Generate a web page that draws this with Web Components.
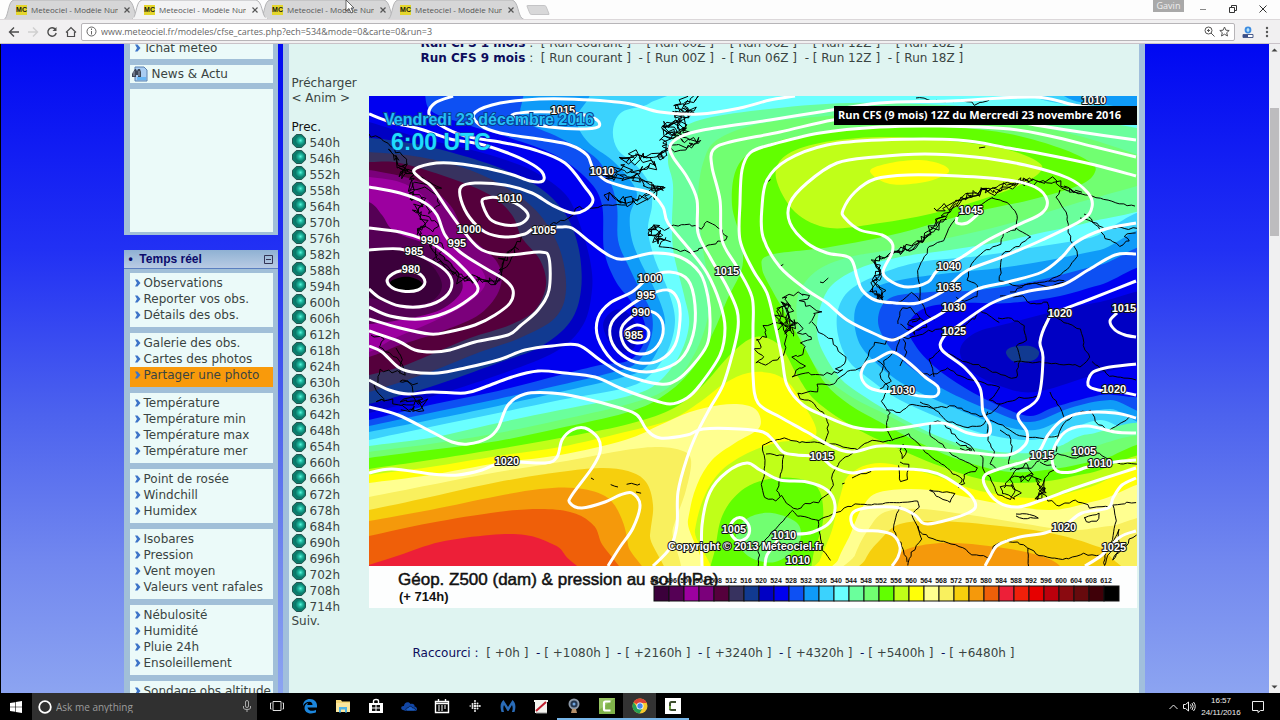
<!DOCTYPE html>
<html lang="fr">
<head>
<meta charset="utf-8">
<title>Meteociel - Modèle Numérique CFS</title>
<style>
  html, body { height: 100%; }
  body {
    margin: 0;
    display: flex;
    flex-direction: column;
    overflow: hidden;
    font: 12px/16px "DejaVu Sans", Verdana, sans-serif;
    color: #3a4442;
    background: #000;
  }
</style>
</head>
<body>
<browser-chrome></browser-chrome>
<page-view>
  <side-column slot="side"></side-column>
  <model-page slot="main"></model-page>
</page-view>
<task-bar></task-bar>

<script>
function define(name, html) {
  customElements.define(name, class extends HTMLElement {
    connectedCallback() {
      if (this.shadowRoot) return;
      this.attachShadow({ mode: 'open' });
      this.shadowRoot.innerHTML = typeof html === 'function' ? html(this) : html;
    }
  });
}

/* ---------- browser window ---------- */

define('browser-tab', el => `
  <style>
    :host { display: block; position: relative; flex: 0 0 128px; width: 128px; min-width: 0; height: 19px; }
    :host([active]) { z-index: 1; }
    svg.shape { position: absolute; left: 0; top: 0; }
    .row { position: relative; display: flex; align-items: center; height: 19px; padding: 0 0 0 12px; gap: 4px; }
    .fav { flex: 0 0 11px; height: 10px; background: #e4d62c; color: #1a1a10; font: bold 7px/10px "Liberation Sans", sans-serif; text-align: center; }
    .title { flex: 1; min-width: 0; overflow: hidden; white-space: nowrap; font: 8px/16px "Open Sans", sans-serif; color: #555; }
    button { flex: 0 0 10px; height: 10px; padding: 0; border: 0; background: none; line-height: 0; }
  </style>
  <svg class="shape" width="136" height="19" viewBox="0 0 136 19">
    <path d="M0 19.500C4 18 4 4 8 1L10 0H124L126 1C131 5 130 18 136 19.500Z" fill="${el.hasAttribute('active') ? '#f3f3f4' : '#d6d6d7'}" stroke="#b4b4b6" stroke-width="1"/>
    ${el.hasAttribute('active') ? '<path d="M1 18.500H135" stroke="#f3f3f4" stroke-width="2"/>' : ''}
  </svg>
  <div class="row">
    <span class="fav">MC</span>
    <span class="title"><slot></slot></span>
    <button aria-label="Close tab"><svg width="10" height="10" viewBox="0 0 10 10"><path d="M2.500 2.500L7.500 7.500M7.500 2.500L2.500 7.500" stroke="#555" stroke-width="1.200"/></svg></button>
  </div>
`);

define('browser-chrome', `
  <style>
    :host { display: block; position: relative; flex: none; background: #fdfdfd; }
    button { padding: 0; border: 0; background: none; line-height: 0; }
    .tabs { display: flex; height: 19px; padding-left: 4px; border-bottom: 1px solid #dcd8da; }
    .new { width: 20px; height: 10px; margin: 5px 0 0 12px; background: #d8d8d9; border: 1px solid #c4c4c6; transform: skewX(22deg); border-radius: 2px; }
    .controls { display: flex; margin-left: auto; padding-right: 2px; }
    .controls button { width: 30px; height: 18px; }
    .controls .user { width: 31px; height: 12px; margin-right: 4px; background: #a9a9a9; color: #eee; font: 9px/12px "Open Sans", sans-serif; }
    .bar { display: flex; align-items: center; height: 23px; background: #f1f0f1; border-bottom: 1px solid #c9c2c8; padding: 0 4px 0 4px; }
    .bar > button { width: 19px; height: 18px; }
    .omni { flex: 1; display: flex; align-items: center; height: 16px; margin: 0 3px 0 1px; padding: 0 4px; background: #fff; border: 1px solid #b7b5b8; border-radius: 2px; gap: 4px; }
    input { flex: 1; min-width: 0; border: 0; padding: 0; background: none; outline: 0; font: 9px/14px "Open Sans", sans-serif; color: #666; }
    .cursor { position: absolute; left: 345px; top: 0; z-index: 3; }
  </style>
  <div class="tabs">
    <browser-tab>Meteociel - Modèle Num</browser-tab>
    <browser-tab active>Meteociel - Modèle Num</browser-tab>
    <browser-tab>Meteociel - Modèle Num</browser-tab>
    <browser-tab>Meteociel - Modèle Num</browser-tab>
    <button class="new" aria-label="New tab"></button>
    <div class="controls">
      <button class="user">Gavin</button>
      <button aria-label="Minimise"><svg width="10" height="10"><path d="M2 5.500H8" stroke="#888"/></svg></button>
      <button aria-label="Restore"><svg width="10" height="10" fill="none" stroke="#333"><path d="M1.500 3.500H6.500V8.500H1.500ZM3.500 3V1.500H8.500V6.500H7"/></svg></button>
      <button aria-label="Close"><svg width="10" height="10"><path d="M1.500 1.500L8.500 8.500M8.500 1.500L1.500 8.500" stroke="#333"/></svg></button>
    </div>
  </div>
  <div class="bar">
    <button aria-label="Back"><svg width="12" height="12" fill="none" stroke="#4c4c4c" stroke-width="1.400"><path d="M11 6H2M6 1.500L1.500 6L6 10.500"/></svg></button>
    <button aria-label="Forward"><svg width="12" height="12" fill="none" stroke="#cfcfcf" stroke-width="1.400"><path d="M1 6H10M6 1.500L10.500 6L6 10.500"/></svg></button>
    <button aria-label="Reload"><svg width="12" height="12" fill="none" stroke="#4c4c4c" stroke-width="1.400"><path d="M9.500 3.500A4.200 4.200 0 1 0 10.200 7"/><path d="M10.500 1V5H6.500Z" fill="#4c4c4c" stroke="none"/></svg></button>
    <button aria-label="Home"><svg width="12" height="12" fill="none" stroke="#4c4c4c" stroke-width="1.200"><path d="M1 6.500L6 1.500L11 6.500M2.500 6V10.500H9.500V6"/></svg></button>
    <div class="omni">
      <svg width="11" height="11" fill="none" stroke="#666"><circle cx="5.500" cy="5.500" r="4.500"/><path d="M5.500 5V8.500M5.500 2.500V4"/></svg>
      <input type="text" aria-label="Address" value="www.meteociel.fr/modeles/cfse_cartes.php?ech=534&amp;mode=0&amp;carte=0&amp;run=3">
      <svg width="11" height="11" fill="none" stroke="#555"><circle cx="4.500" cy="4.500" r="3.500"/><path d="M7 7L10.500 10.500M3 4.500H6M4.500 3V6"/></svg>
      <svg width="11" height="11" fill="none" stroke="#555"><path d="M5.500 1L6.900 4.200L10.200 4.500L7.700 6.700L8.500 10L5.500 8.200L2.500 10L3.300 6.700L0.800 4.500L4.100 4.200Z"/></svg>
    </div>
    <button aria-label="Extension"><svg width="12" height="12"><circle cx="6" cy="4" r="3.400" fill="#3c8be0"/><path d="M6 2V6M4.500 4H7.500" stroke="#dff"/><path d="M1 8.500H11V11.500H1Z" fill="#fff" stroke="#4a5c8c"/><path d="M1 9H6V11H1Z" fill="#3b4f8a"/></svg></button>
    <button aria-label="Menu"><svg width="4" height="12" fill="#555"><circle cx="2" cy="2" r="1.200"/><circle cx="2" cy="6" r="1.200"/><circle cx="2" cy="10" r="1.200"/></svg></button>
  </div>
  <svg class="cursor" width="12" height="16"><path d="M1 0V11L4 8.500L6 13L8 12L6 8H9Z" fill="#fff" stroke="#444" stroke-width="0.800"/></svg>
`);

/* ---------- page ---------- */

define('page-view', `
  <style>
    :host { flex: 1; min-height: 0; display: flex; }
    .scroll { flex: 1; min-width: 0; overflow: hidden; border-left: 1px solid #000;
      background: linear-gradient(#0008f2, #2231f4 32%, #4c62ee 57%, #7288ef 80%, #8ca4f1); }
    .sheet { display: flex; justify-content: center; gap: 5px; margin-top: -12px; padding-right: 2px; align-items: flex-start; }
    .bar { flex: 0 0 11px; display: flex; flex-direction: column; justify-content: space-between; align-items: center; background: #f0f0f1; padding: 4px 0; box-sizing: border-box; }
    .track { flex: 1; align-self: stretch; padding-top: 56px; }
    .thumb { height: 128px; margin: 0 1px; background: #bdbcbe; }
  </style>
  <div class="scroll"><div class="sheet"><slot name="side"></slot><slot name="main"></slot></div></div>
  <div class="bar">
    <svg width="7" height="4"><path d="M0.500 3.500L3.500 0.500L6.500 3.500Z" fill="#444"/></svg>
    <div class="track"><div class="thumb"></div></div>
    <svg width="7" height="4"><path d="M0.500 0.500L3.500 3.500L6.500 0.500Z" fill="#444"/></svg>
  </div>
`);

define('menu-link', `
  <style>
    :host { display: block; }
    a { display: flex; align-items: center; gap: 3px; height: 16px; padding-left: 5px; color: inherit; text-decoration: none; white-space: nowrap; }
    :host([hot]) { background: #f99a0b; }
  </style>
  <a href="#"><svg width="6" height="8" viewBox="0 0 6 8"><path d="M0 0.500H2.500L5.500 4L2.500 7.500H0L2 4Z" fill="#3d74c8"/></svg><slot></slot></a>
`);

define('menu-box', `
  <style>
    :host { display: block; background: #ebfaf9; padding: 2px 0 4px; overflow: hidden; }
    :host([first]) { padding: 8px 0 3px; }
    :host([ends-hot]) { background: linear-gradient(0deg, #f99a0b 4px, #ebfaf9 4px); }
    :host([tight]) { padding: 1px 0; }
    :host([blank]) { height: 137px; }
  </style>
  <slot></slot>
`);

const groups = [
  ['Observations', 'Reporter vos obs.', 'Détails des obs.'],
  ['Galerie des obs.', 'Cartes des photos', '*Partager une photo'],
  ['Température', 'Température min', 'Température max', 'Température mer'],
  ['Point de rosée', 'Windchill', 'Humidex'],
  ['Isobares', 'Pression', 'Vent moyen', 'Valeurs vent rafales'],
  ['Nébulosité', 'Humidité', 'Pluie 24h', 'Ensoleillement'],
  ['Sondage obs altitude', 'Radiosondages']
];

define('side-column', `
  <style>
    :host { display: flex; flex-direction: column; gap: 15px; flex: 0 0 154px; }
    .panel { background: #a1bfd8; padding: 0 5px 3px 6px; display: flex; flex-direction: column; gap: 6px; }
    .news { display: flex; align-items: center; gap: 4px; height: 16px; padding-left: 2px; color: inherit; text-decoration: none; }
    h2 { display: flex; align-items: center; justify-content: space-between; margin: 0 -5px -2px -6px; height: 18px; padding: 0 5px; border-bottom: 1px solid #5b7fc0;
      background: linear-gradient(#8fb1d3, #b9cbe4); font: bold 12px/18px "Liberation Sans", sans-serif; color: #0b0b6b; }
    h2 button { width: 9px; height: 9px; padding: 0; border: 0; background: none; line-height: 0; }
  </style>
  <div class="panel">
    <menu-box first><menu-link>Tchat météo</menu-link></menu-box>
    <menu-box tight><a class="news" href="#">
      <svg width="16" height="16" viewBox="0 0 16 16"><path d="M3 1H12L15 4V15H3Z" fill="#a9cdf2" stroke="#5980b0"/><path d="M5 11H14V14H5Z" fill="#67b6f4"/><path d="M1 6L3 3H4L5 5L6 3H8L9 6V11H6V9H4V11H0V8Z" fill="#3c4656"/><path d="M2 5V10M7 5V10" stroke="#9aa6b5"/></svg>News &amp; Actu</a></menu-box>
    <menu-box blank></menu-box>
  </div>
  <div class="panel">
    <h2><span>•&nbsp; Temps réel</span><button aria-label="Réduire"><svg width="9" height="9"><path d="M0.500 0.500H8.500V8.500H0.500ZM2 4.500H7" fill="none" stroke="#333355"/></svg></button></h2>
    ${groups.map(g => `<menu-box${g.some(t => t[0] === '*') ? ' ends-hot' : ''}>${g.map(t =>
      t[0] === '*' ? `<menu-link hot>${t.slice(1)}</menu-link>` : `<menu-link>${t}</menu-link>`).join('')}</menu-box>`).join('')}
  </div>
`);

define('hour-link', `
  <style>
    :host { display: block; height: 16px; }
    a { display: flex; gap: 4px; color: inherit; text-decoration: none; line-height: 19px; }
  </style>
  <a href="#"><svg width="14" height="14" viewBox="0 0 14 14">
    <defs><radialGradient id="g" cx="0.600" cy="0.450" r="0.500"><stop offset="0" stop-color="#5cf5dc"/><stop offset="0.450" stop-color="#1cb59c"/><stop offset="1" stop-color="#0b7868"/></radialGradient></defs>
    <path d="M4.300 0.500H9.700L13.500 4.300V9.700L9.700 13.500H4.300L0.500 9.700V4.300Z" fill="#0c7c6c" stroke="#24544e"/><circle cx="7.500" cy="7" r="5" fill="url(#g)"/>
  </svg><slot></slot></a>
`);

const hours = [];
for (let h = 540; h <= 714; h += 6) hours.push(h);
const runLine = (n) => `<p><b>Run CFS ${n} mois</b> :  ${['courant', '00Z', '06Z', '12Z', '18Z'].map(r => `[ <a href="#">Run ${r}</a> ]`).join('  - ')}</p>`;

define('model-page', `
  <style>
    :host { display: block; flex: 0 1 850px; min-height: 700px; padding-top: 4px; border: solid #a1bfdc; border-width: 0 6px; background: #dff4f1; line-height: 15px; }
    p { margin: 0; white-space: pre; }
    b, .cut { color: #0d0d5c; }
    a { color: inherit; text-decoration: none; }
    .runs { padding-left: 132px; }
    .body { display: flex; padding: 10px 0 0 3px; }
    .hours { flex: 0 0 77px; }
    .hours p:nth-child(3) { margin: 14px 0 -1px; color: #111; }
    weather-map { margin-top: 20px; }
    .cut { padding: 17px 0 0 124px; }
    .cut a { color: #3a4442; }
  </style>
  <div class="runs">${runLine(1)}${runLine(9)}</div>
  <div class="body">
    <div class="hours">
      <p><a href="#">Précharger</a></p><p><a href="#">&lt; Anim &gt;</a></p>
      <p><a href="#">Prec.</a></p>
      ${hours.map(h => `<hour-link>${h}h</hour-link>`).join('')}
      <p><a href="#">Suiv.</a></p>
    </div>
    <weather-map></weather-map>
  </div>
  <p class="cut">Raccourci :  ${[0, 1080, 2160, 3240, 4320, 5400, 6480].map(h => `<a href="#">[ +${h}h ]</a>`).join('  - ')}</p>
`);

/* ---------- chart ---------- */

const palette = ['#3b003b', '#550055', '#9c00a0', '#7b007b', '#55003c', '#37325f', '#113a91', '#0000c4', '#0000f0', '#0d50f3', '#0f9bf8',
  '#3bd2fd', '#6affff', '#6aff9c', '#71ff71', '#62ff00', '#c0ff18', '#ffff08', '#ffff90', '#f9f05e', '#f6cf0d', '#f5990b', '#ef5f09',
  '#ed1f38', '#ef200a', '#e60000', '#bb000c', '#8a0a10', '#660a0d', '#3f0008', '#000000'];

// smooth curve through a "x,y x,y" list
function curve(text, closed) {
  const p = text.trim().split(/\s+/).map(s => s.split(',').map(Number));
  const n = p.length;
  const at = i => closed ? p[(i + n) % n] : p[Math.max(0, Math.min(n - 1, i))];
  let d = `M${p[0]}`;
  for (let i = 0; i < (closed ? n : n - 1); i++) {
    const [a, b, c, e] = [at(i - 1), at(i), at(i + 1), at(i + 2)];
    d += `C${(b[0] + (c[0] - a[0]) / 6).toFixed(1)},${(b[1] + (c[1] - a[1]) / 6).toFixed(1)} ${(c[0] - (e[0] - b[0]) / 6).toFixed(1)},${(c[1] - (e[1] - b[1]) / 6).toFixed(1)} ${c}`;
  }
  return d + (closed ? 'Z' : '');
}

let seed = 7;
const rnd = () => (seed = (seed * 16807) % 2147483647) / 2147483647 - 0.5;

// broken coast line: every segment is cut up and shaken by amp
function coast(text, amp) {
  const p = text.trim().split(/\s+/).map(s => s.split(',').map(Number));
  let d = `M${p[0]}`;
  for (let i = 1; i < p.length; i++) {
    const [x0, y0] = p[i - 1], [x1, y1] = p[i];
    const k = Math.max(1, Math.round(Math.hypot(x1 - x0, y1 - y0) / 4));
    for (let j = 1; j <= k; j++)
      d += `L${(x0 + (x1 - x0) * j / k + rnd() * amp).toFixed(1)},${(y0 + (y1 - y0) * j / k + rnd() * amp).toFixed(1)}`;
  }
  return d;
}

const south = ' 1160,600 340,600';
const fills = [
  // western cold pool and the Iceland low
  [11, '340,447 369,440 430,427 498,413 560,400 625,388 650,375 668,350 675,320 668,290 655,260 648,230 652,205 650,185 636,165 618,150 613,130 622,112 650,103 665,80 340,80'],
  [10, '340,438 369,432 430,420 498,406 560,392 620,378 645,368 660,345 665,320 655,290 642,265 632,240 630,215 637,195 630,180 612,160 588,142 576,120 573,80 340,80'],
  [9, '340,432 369,426 430,413 498,399 560,385 610,373 635,364 650,342 652,315 640,290 628,265 618,240 616,200 598,160 560,138 522,118 508,80 340,80'],
  [8, '340,425 369,420 430,405 498,391 560,375 600,365 630,360 645,340 643,318 630,300 615,280 604,250 602,205 588,180 555,155 510,138 465,124 430,110 415,80 340,80'],
  [7, '340,420 369,413 430,397 498,375 555,352 583,325 592,290 590,260 580,225 566,195 535,172 500,158 460,147 420,138 369,122 340,115'],
  [7, '603,325 615,310 630,315 638,332 632,350 615,350'],
  [6, '340,410 369,404 430,387 498,363 540,347 570,322 581,290 579,250 566,215 540,188 500,168 450,152 410,143 369,138 340,138'],
  [5, '340,398 369,392 430,372 480,352 520,338 555,318 566,290 560,250 540,215 510,190 470,170 420,157 369,152 340,150'],
  [4, '340,382 369,375 400,367 430,355 470,338 510,325 535,310 546,285 540,260 522,238 512,215 490,195 450,178 400,163 369,162 340,162'],
  [3, '340,362 369,357 400,345 440,332 480,314 500,288 497,262 465,232 450,205 420,182 369,170 340,170'],
  [2, '340,358 369,352 395,338 430,323 465,305 485,285 478,265 447,238 432,205 405,184 369,177 340,176'],
  [1, '340,325 369,324 400,320 440,310 462,290 455,268 430,246 395,232 382,215 369,202 340,195'],
  [0, '340,300 369,298 400,305 430,302 442,285 428,262 398,250 369,248 340,248'],
  [30, '390,283 398,278 410,277 420,281 422,286 414,291 400,291'],
  // eastern trough
  [11, '1160,222 1090,238 1030,248 980,256 920,262 880,274 850,290 838,310 838,335 848,360 868,378 900,400 940,418 985,434 1030,440 1065,432 1100,420 1160,424'],
  [10, '1160,238 1100,250 1050,260 1000,268 950,273 900,280 870,290 855,310 858,340 875,362 905,385 950,406 1000,425 1035,430 1070,417 1110,409 1160,414'],
  [9, '1160,254 1100,265 1040,280 980,290 930,292 890,298 878,320 888,345 910,367 945,390 990,410 1030,422 1070,408 1110,400 1160,404'],
  [8, '1160,270 1100,285 1060,296 1010,303 960,303 925,308 908,325 915,345 935,367 965,388 1000,406 1030,416 1055,407 1100,395 1160,386'],
  [7, '1160,292 1100,302 1060,310 1010,323 975,333 960,350 970,370 1000,386 1035,392 1090,376 1160,352'],
  [6, '1006,353 1012,347 1030,346 1039,352 1034,360 1015,362'],
  // north-east corner
  [11, '1000,80 1040,99 1080,106 1160,116 1160,80'],
  [10, '1050,80 1070,99 1100,104 1160,109 1160,80'],
];
const warm = [
  [13, '340,452 369,446 430,438 498,423 560,410 625,397 655,385 678,358 689,325 684,295 674,255 672,225 673,185 668,160 675,135 700,120 760,110 850,103 960,106 1060,114 1110,123 1160,140 1160,200 1090,222 1040,233 1000,242 950,250 900,257 860,268 832,285 820,308 817,332 823,352 840,378 862,395 890,412 940,437 985,450 1030,453 1060,446 1090,434 1160,436' + south],
  [14, '340,459 369,452 430,444 498,433 560,420 625,405 665,390 690,362 706,325 710,290 703,250 698,200 704,160 720,138 770,122 870,114 960,117 1030,125 1100,142 1160,165 1160,178 1080,202 1000,226 900,248 850,257 815,272 797,300 802,340 820,372 850,396 885,414 930,436 985,455 1030,460 1080,450 1160,446' + south],
  [15, '340,464 369,458 430,450 498,441 560,428 625,413 660,398 690,372 712,335 727,300 742,268 741,240 732,205 736,170 755,150 800,136 880,127 950,127 1010,134 1060,148 1090,162 1095,172 1080,185 1030,200 970,213 900,233 830,247 770,255 762,268 772,290 788,318 806,350 825,383 850,405 880,422 920,443 960,460 1010,472 1060,468 1100,460 1160,452' + south],
  [16, '340,474 369,469 430,460 498,449 560,438 625,425 670,410 700,388 728,357 748,340 764,337 782,348 797,375 815,400 850,425 890,445 940,466 990,481 1040,482 1090,473 1160,462' + south],
  [17, '340,480 369,475 430,467 498,456 560,447 625,432 670,420 700,402 725,383 748,373 770,373 788,382 802,402 816,428 810,440 780,442 750,452 722,470 705,495 695,530 686,600 340,600'],
  [17, '805,600 820,560 832,530 840,497 850,474 880,463 930,474 980,491 1040,498 1090,487 1160,468 1160,600'],
  [18, '340,487 369,483 430,475 498,463 560,455 625,440 660,425 690,412 720,405 745,405 758,412 759,428 735,443 712,460 697,485 688,520 676,600 340,600'],
  [18, '825,600 838,560 850,535 862,508 880,492 930,490 990,502 1050,510 1100,500 1160,488 1160,600'],
  [19, '340,502 369,497 430,485 498,472 560,462 620,451 655,447 680,450 691,460 686,490 673,528 652,600 340,600'],
  [19, '840,600 855,555 868,530 885,512 920,509 970,515 1020,523 1070,530 1110,526 1160,520 1160,600'],
  [20, '340,515 369,510 430,497 498,482 560,472 600,468 628,471 646,482 653,505 650,535 643,600 340,600'],
  [20, '850,600 865,560 880,540 900,524 940,521 1000,526 1050,533 1090,544 1110,556 1125,600'],
  [21, '340,527 369,521 430,510 498,496 540,489 575,488 605,496 620,515 628,545 630,600 340,600'],
  [21, '870,600 892,565 905,550 940,543 980,545 1030,553 1060,566 1080,600'],
  [22, '340,542 369,536 430,523 498,512 540,509 570,512 590,522 600,540 610,600 340,600'],
  [23, '340,575 369,565 400,555 440,542 490,535 525,535 550,543 565,555 585,600 340,600'],
  // Iberian low
  [15, '712,600 716,545 724,512 745,488 775,478 805,480 820,492 823,520 815,548 795,600'],
  [14, '736,535 748,518 772,513 798,524 798,545 775,562 748,556'],
  // Norwegian Sea high
  [16, '776,178 785,156 820,143 880,137 950,141 1005,149 1038,162 1040,172 1020,185 980,200 930,214 880,223 830,228 795,212'],
  [17, '870,171 890,163 920,160 943,165 948,173 925,182 890,184'],
];

const isobars = [
  '453,96 435,103 429,114 440,125 465,136 500,142 535,150 565,163 585,187 593,200 585,210 572,213 552,205 532,193 505,185 475,183 461,187 461,200 470,218 485,232 505,237 525,234 535,228 560,227 572,228 590,242 610,256 625,259 653,253 680,257 700,273 708,297 710,325 707,345 693,365 677,380 660,384 625,375 600,360 578,345 552,346 525,350 498,360 465,368 438,373 412,372 398,367 382,352 369,346',
  '369,114 390,122 420,129 450,139 480,144 505,152 528,162 542,172 543,181 530,181 510,174 480,167 450,163 430,164 414,170 420,178 432,187 448,210 465,233 482,250 508,255 540,252 549,258 549,290 538,310 520,326 508,335 475,342 450,350 432,352 415,350 398,341 369,331',
  '795,96 770,100 740,108 700,114 660,112 625,103 565,99 525,100 492,105 474,114 480,125 500,133 545,140 570,145 587,155 593,168 605,180 625,187 650,193 663,207 668,223 690,250 707,273 720,303 725,328 720,355 700,385 687,398 670,404 647,398 620,388 595,377 565,373 538,371 512,377 485,387 465,393 432,392 408,394 389,390 369,380',
  '369,250 400,249 425,258 445,270 452,283 445,297 425,306 400,306 380,298 369,289',
  '369,228 400,232 425,240 445,252 465,270 478,288 468,300 445,313 420,319 390,316 369,307',
  '369,187 400,193 425,203 437,215 445,235 460,252 485,268 505,280 513,290 510,303 495,315 475,325 448,332 430,334 400,328 369,319',
  '1136,110 1080,106 1035,97 950,101 880,103 820,112 770,120 703,130 680,137 670,146 673,157 687,177 697,200 698,233 710,257 727,287 737,310 738,328 733,352 723,385 710,408 697,433 687,458 678,492 677,525 670,548 653,566',
  '1136,140 1080,132 1035,125 960,113 880,115 833,120 780,132 730,142 713,150 712,167 720,200 722,240 737,267 752,297 753,330 753,375 758,403 780,417 807,432 833,447 853,452 880,446 925,448 975,453 1008,455 1025,445 1027,432 1018,415 1038,398 1043,358 1040,342 1047,322 1055,313 1088,300 1136,281',
  '1136,157 1095,147 1050,136 1010,129 940,126 880,127 820,133 770,145 750,153 742,170 740,203 740,240 753,270 767,293 775,325 782,358 787,385 803,405 827,417 853,427 880,430 908,427 942,423 968,433 988,435 990,425 983,412 980,388 965,368 942,350 943,338 955,328 992,303 1025,292 1062,285 1088,270 1115,255 1136,254',
  '1136,176 1095,165 1048,155 1008,148 958,140 880,140 827,145 787,160 767,180 762,207 763,237 780,267 807,290 827,303 847,320 875,334 892,340 908,333 922,324 942,313 975,290 1008,282 1042,272 1062,257 1075,243 1102,230 1136,223',
  '957,217 957,223 967,223 978,214',
  '1136,364 1105,368 1092,373 1088,385 1098,390 1115,391 1136,395',
  '1117,313 1110,321 1115,330 1125,335 1136,337',
  '1136,418 1115,413 1082,413 1062,420 1048,435 1040,450 1028,460 1002,468 985,475 985,486 998,502 1018,507 1042,500 1075,488 1108,477 1136,468',
  '1136,433 1115,432 1088,426 1068,430 1057,442 1052,458 1057,471 1072,472 1088,467 1115,462 1136,460',
  '1136,478 1122,485 1113,498 1108,508 1082,513 1065,525 1045,533 1020,537 998,545 990,557 985,566',
  '1136,531 1120,537 1102,555 1085,566',
  '369,407 398,415 432,432 452,442 468,444 488,438 498,428 508,405 525,394 552,393 578,397 620,408 637,415 647,430 660,438 687,435 703,429 740,429 763,432 773,440 783,452 797,455 820,457 833,467 853,473 875,469 928,471 958,485 975,502 968,513 928,524 915,515 900,508 875,507 855,511 851,521 858,530 878,531 893,535 900,547 898,557 892,566',
  '369,473 392,469 432,474 458,475 482,470 505,462 545,463 557,457 562,440 572,430 585,428 598,438 600,452 592,468 572,495 570,503 582,508 605,502 620,495 632,493 640,505 633,528 620,547 608,566',
  '702,566 702,525 710,492 727,472 747,463 760,470 780,480 807,482 827,490 835,505 830,522 813,532 797,534 784,532',
  '765,566 767,555 778,540',
];
const rings = [
  '482,202 487,198 500,198 515,203 525,210 528,217 520,224 505,225 490,219',
  '512,115 530,112 555,112 580,114 597,120 598,127 580,129 550,127 525,122',
  '388,278 400,271 418,273 425,282 418,290 402,291 390,286',
  '626,331 637,325 648,330 647,340 637,343 628,339',
  '640,312 655,313 663,325 660,342 648,353 632,352 622,340 623,325',
  '648,295 668,290 678,300 680,320 675,345 660,360 640,363 622,355 611,340 612,322 628,307',
  '650,277 670,272 688,280 695,305 693,335 680,360 655,371 632,370 612,360 598,338 598,318 610,303 632,292',
  '875,157 925,154 975,157 1025,165 1068,178 1088,193 1092,207 1082,220 1042,240 1002,257 968,270 953,282 942,292 918,303 895,303 875,300 862,290 857,277 850,258 827,253 807,243 790,223 790,203 807,183 837,163',
  '875,179 908,175 958,176 1008,180 1035,187 1047,200 1042,213 1018,225 988,240 962,257 938,270 928,282 908,287 892,282 883,272 892,253 892,243 882,235 860,230 845,218 843,210 855,192',
  '875,360 892,352 908,362 925,377 938,387 936,396 920,396 900,392 880,391 867,386 861,375 866,363',
  '730,528 734,520 742,518 749,526 748,536 740,541 733,537',
];

const coasts = [
  // Greenland
  [4, '369,134 384,140 396,152 408,160 402,166 418,176 430,182 440,190 428,186 415,182 408,190 424,188 440,196 438,206 430,212 424,204 418,214 428,218 440,222 434,230 422,226 420,236 434,238 444,246 440,254 448,262 456,270 462,278 472,276 484,280 496,284 500,272 508,262 516,250 520,240 528,232 545,226 562,222 572,216 580,208 600,206 625,203'],
  [9, '390,150 404,168 398,176 412,172 410,196 424,200 414,210 424,220 418,232 430,244 436,262 448,268 460,280 476,280 490,284 500,278 498,266 506,254 516,248'],
  [10, '604,195 625,202 640,200 660,192 664,186 650,190 640,178 622,176 608,180 616,168 636,172 654,168 650,158 624,162 632,154 656,158 668,150 664,140 676,136 666,128 688,128 680,120 672,114 692,112 684,104 698,98'],
  [8, '660,160 664,150 690,146 698,140 680,140 664,132 684,132 676,122 662,126 690,116 674,106 686,98'],
  [2, '620,175 636,177 650,184 664,187 650,190 640,198 630,203 620,203'],
  // Newfoundland and Labrador
  [4, '371,335 384,340 378,348 392,352 400,362 404,374 396,372 380,370 374,388 386,400 378,402 392,400 400,406 416,402 424,398 412,396 410,384 400,380 418,384'],
  [8, '400,402 412,398 424,402 420,408 404,408'],
  [5, '396,348 400,360 402,374'],
  // Iceland
  [7, '648,230 658,224 650,236 662,232 656,242 668,240'],
  [3, '650,232 656,225 664,230 672,226 682,226 692,225 700,228 708,222 716,226 724,232 728,238 718,242 708,245 700,248 690,252 680,250 668,248 660,246 664,240 654,238 664,236 655,230'],
  [5, '764,182 770,180'], [5, '777,262 784,266'], [6, '820,282 826,278'], [4, '979,148 984,148'],
  // Ireland and Great Britain
  [3, '756,340 766,336 764,326 774,322 784,326 786,336 785,350 780,358 766,364 756,362 764,356 755,350 762,346 756,340'],
  [6, '778,330 786,318 776,310 790,304 782,298 796,294 808,294 802,300 812,306 819,310 810,318 812,322'],
  [8, '782,306 778,318 786,326 790,312 784,300 792,320 786,332 794,322 790,336'],
  [3, '812,322 820,332 832,340 838,352 846,356 844,364 836,368 842,371 828,374 812,374 800,374 792,378 800,368 806,366 796,360 792,358 802,354 806,346 800,342 812,340 806,332 798,334 802,328 796,322'],
  // France, Iberia
  [2, '869,352 862,368 848,372 838,380 830,386 818,384 818,392 806,392 798,394 800,398 812,402 820,410 828,422 828,436 824,444 810,442 796,442 784,438 770,441 762,446 764,456 765,466 762,484 765,498 775,500 781,496 790,506 798,510 806,504 818,502 828,494 833,486 832,474 840,462 852,454 864,444 872,440 884,442 892,440'],
  [2, '766,454 784,456 783,464 780,478 777,490 780,496'], [2, '825,442 840,446 858,450'],
  [3, '852,478 860,474 870,472'], [3, '842,484 846,482'],
  // North Africa
  [2, '758,567 759,548 772,532 786,518 792,510 797,516 808,518 818,520 836,512 856,504 882,504 900,502 918,500 919,508 912,514 918,530 922,534 936,540 956,544 972,554 990,558 994,546 1006,540 1024,545 1040,556 1062,560 1084,554 1100,556 1106,552 1112,540 1116,520 1114,506'],
  [2, '918,526 922,540 912,552 908,566'], [2, '900,506 893,530 902,546 908,562'], [2, '818,520 822,550 830,560'], [2, '1028,548 1028,567'], [2, '1106,552 1104,566 1112,545 1118,530 1120,548 1112,560 1130,540 1136,534'],
  // Italy and islands
  [2, '892,440 900,438 908,434 920,446 932,458 944,466 952,474 962,478 958,488 964,484 964,474 976,472 978,468 966,462 952,456 942,444 930,436 930,424 938,420 950,430 956,438 970,446 982,458 984,472 992,480 998,494 1010,500 1016,490 1010,478 1018,468 1032,468 1040,460'],
  [2, '930,490 946,492 954,494 950,503 936,496 930,490'], [2, '903,444 907,452 903,458 900,450 903,444'], [2, '900,462 908,464 907,480 900,482 899,466'],
  [6, '1004,488 1014,484 1020,492 1014,500 1000,492 1010,478 1024,480 1030,476'], [6, '1010,470 1024,464 1032,472 1020,480 1040,478'], [8, '1036,478 1044,490 1036,500 1046,484'],
  [2, '1016,514 1030,515 1038,519 1024,518 1016,516'], [2, '1084,518 1100,514 1096,522 1086,522 1084,518'],
  // Turkey and the Black Sea
  [3, '1040,462 1056,466 1044,478 1040,490 1048,500 1060,506 1076,500 1090,508 1106,506 1120,504 1136,502'],
  [2, '1044,462 1058,454 1076,458 1096,452 1112,462 1136,465'], [2, '1056,452 1058,436 1064,424 1076,414 1090,410 1096,422 1108,430 1120,424 1128,418 1136,416'],
  [5, '956,442 964,446 972,452 960,446'],
  // Norway
  [7, '875,300 885,290 874,284 880,270 872,262 884,256 900,250 912,246 924,238 934,226 946,212 958,204 970,196 984,190 1000,188 1016,180 1034,182 1050,180 1066,188 1080,194'],
  [8, '934,208 950,206 964,196 980,192 996,192 1010,186 1030,180'], [8, '874,262 880,274 872,288 884,300 876,296'], [7, '892,254 900,252 916,246 930,232 944,220'],
  [2, '880,302 890,304 900,302 912,292 920,300 926,314 934,320'],
  [2, '1064,186 1078,194 1100,198 1120,204 1136,206'], [2, '1080,218 1092,222 1100,228 1106,238 1120,246 1130,240 1124,236 1136,232'], [3, '1084,214 1096,224 1106,228 1136,228'],
  [2, '920,300 918,270 930,246 944,240 950,226 962,212 978,206 992,198'], [2, '992,198 1008,202 1018,218 1016,230 1004,232 1000,244 980,254 970,268 968,280 978,286 978,296 964,302 956,296'],
  [2, '1016,228 1030,236 1020,246 1002,254 1000,280 1016,286 1040,282 1064,280'], [2, '1060,190 1056,198 1066,212 1068,228 1072,244 1078,256 1064,272 1050,280'],
  [3, '1010,292 1030,284 1050,286 1068,282'], [2, '1000,296 1022,296 1030,304 1048,302 1050,314 1044,326'],
  // Denmark, Germany, Poland
  [6, '898,324 900,312 910,308 918,318 908,326 914,332 898,326'], [5, '912,322 924,318 928,326 916,330'],
  [3, '869,352 876,342 884,344 892,338 900,336 912,338 926,332 940,330 960,326 976,318 980,310 990,314 998,322'],
  [2, '998,318 1012,318 1024,326 1026,340 1016,346 1020,360 1016,378 1004,376 990,370 974,364 960,360 948,354'], [2, '900,338 896,352 884,360 880,378 888,386 882,402 890,412 886,426 892,440'],
  [2, '1014,362 1040,362 1080,366 1090,358 1084,346 1080,330 1064,322 1050,314'], [2, '920,372 930,376 948,368 964,378 980,382 1000,388 990,400 1000,404 1020,398 1040,396'],
  [2, '886,410 900,412 912,404 934,408 954,406 968,412 980,416 992,414 1000,404'], [2, '920,402 936,410 946,420 968,428 984,424 988,412'], [2, '1050,392 1060,408 1066,420'],
  [2, '990,420 1006,428 1020,436 1040,438 1058,436'], [2, '988,424 988,440 994,452 990,464 1000,470'], [2, '1000,430 1010,436 1012,450 1008,464'],
  [2, '900,366 906,352 904,340'], [2, '940,350 930,360 934,376'], [2, '1136,380 1110,376 1092,362'], [3, '876,358 884,366 892,380 880,388'],
  [3, '916,98 940,102 960,100 975,104 1000,98'], [3, '640,484 628,485'], [3, '636,492 640,492'], [3, '618,487 612,485'], [2, '591,478 593,479'],
];

const labels = [['1015', 563, 114], ['1010', 602, 175], ['1010', 510, 202], ['1000', 469, 233], ['1005', 544, 234], ['990', 430, 244], ['995', 457, 247],
  ['985', 414, 255], ['980', 411, 273], ['1000', 650, 282], ['995', 646, 299], ['990', 641, 316], ['985', 634, 339], ['1015', 727, 275],
  ['1010', 1094, 104], ['1045', 971, 214], ['1040', 949, 270], ['1035', 949, 291], ['1030', 954, 311], ['1025', 954, 335], ['1020', 1060, 317],
  ['1015', 1124, 312], ['1030', 903, 394], ['1020', 1114, 393], ['1015', 1042, 459], ['1005', 1084, 455], ['1010', 1100, 467], ['1020', 1064, 531],
  ['1025', 1114, 551], ['1015', 822, 460], ['1020', 507, 465], ['1005', 734, 533], ['1010', 784, 539], ['1010', 798, 564]];

define('weather-map', () => {
  const area = ([k, pts]) => `<path d="${curve(pts, true)}" fill="${palette[k]}"/>`;
  // fjords and islands get a second pass
  const shore = ([amp, pts]) => `<path d="${coast(pts, amp)}${amp > 6 ? coast(pts, amp) : ''}"/>`;
  return `
  <style>
    :host { display: block; flex: 0 1 768px; min-width: 0; height: 512px; }
    svg { display: block; width: 100%; height: 512px; }
    .halo { fill: #fff; stroke: #111; stroke-width: 2px; paint-order: stroke; stroke-linejoin: round; font: bold 11px "Liberation Sans", sans-serif; }
    .date { fill: #22c0f8; stroke: #0a3f90; stroke-width: 2px; paint-order: stroke; font: bold 16px "Liberation Sans", sans-serif; }
    .time { font-size: 23px; fill: #1fdcff; stroke-width: 1px; }
    .run { fill: #fff; font: bold 11px "Open Sans", sans-serif; }
    .name { fill: #111; stroke: #111; stroke-width: 0.500px; font: 17px "Liberation Sans", sans-serif; }
    .step { fill: #111; font: bold 13px "Liberation Sans", sans-serif; }
    .tick { fill: #111; font: bold 7px "Liberation Sans", sans-serif; text-anchor: middle; }
    .mid { text-anchor: middle; }
  </style>
  <svg viewBox="369 96 768 512" role="img" aria-label="Géopotentiel 500 hPa et pression au sol">
    <defs><clipPath id="frame"><path d="M369 96H1137V566H369Z"/></clipPath></defs>
    <path d="M369 96H1137V608H369Z" fill="#fdfefe"/>
    <g clip-path="url(#frame)">
      <path d="M369 96H1137V566H369Z" fill="${palette[12]}"/>
      ${fills.map(area).join('')}${warm.map(area).join('')}
      <g fill="none" stroke="#000" stroke-width="1">${coasts.map(shore).join('')}</g>
      <g fill="none" stroke="#fff" stroke-width="3">
        ${isobars.map(p => `<path d="${curve(p)}"/>`).join('')}${rings.map(p => `<path d="${curve(p, true)}"/>`).join('')}
      </g>
      ${labels.map(([t, x, y]) => `<text class="halo mid" x="${x}" y="${y}">${t}</text>`).join('')}
    </g>
    <text class="date" x="384" y="125">Vendredi 23 décembre 2016</text>
    <text class="date time" x="391" y="150">6:00 UTC</text>
    <path d="M834 106H1137V125H834Z"/>
    <text class="run" x="838" y="119">Run CFS (9 mois) 12Z du Mercredi 23 novembre 2016</text>
    <text class="halo" x="668" y="550">Copyright © 2013 Meteociel.fr</text>
    <text class="name" x="398" y="585">Géop. Z500 (dam) &amp; pression au sol (hPa)</text>
    <text class="step" x="399" y="601">(+ 714h)</text>
    ${palette.map((c, i) => `<rect x="${654 + i * 15}" y="586" width="15" height="15" fill="${c}" stroke="#111"/><text class="tick" x="${656 + i * 15}" y="583">${492 + i * 4}</text>`).join('')}
  </svg>`;
});

/* ---------- task bar ---------- */

define('task-button', `
  <style>
    :host { display: block; flex: 0 0 33px; }
    button { display: flex; align-items: center; justify-content: center; width: 100%; height: 27px; padding: 0; border: 0; border-bottom: 2px solid transparent; background: none; box-sizing: border-box; }
    :host([open]) button { border-color: #76b5e8; }
    :host([current]) button { background: #333; }
  </style>
  <button><slot></slot></button>
`);

const apps = [
  ['Task view', '', '<path d="M4 3.500H12V12.500H4ZM2.500 5H1.500V11H2.500M13.500 5H14.500V11H13.500" fill="none" stroke="#ddd"/>'],
  ['Edge', '', '<path d="M1 8C1 3.500 4 1 8 1C12.500 1 15 4 15 7.500V9.500H5.500C5.800 12 8 12.800 10 12.800C11.800 12.800 13 12.300 14 11.700V14.300C13 15 11 15.500 9 15.500C5 15.500 2.500 13 2.500 10C2.500 7.500 4 5.500 6.500 4.800C5.500 5.500 5.300 6.500 5.300 7H10.500C10.500 5 9.500 3.700 7.500 3.700C4.500 3.700 2 5.500 1 8Z" fill="#1c86dc"/>'],
  ['Explorer', '', '<path d="M1 2H6L7 3.500H15V14H1Z" fill="#f5d877"/><path d="M1 5H15V14H1Z" fill="#fbe79d"/><path d="M4 9H12V14.500H10V11.500H6V14.500H4Z" fill="#4fb4e6"/>'],
  ['Store', '', '<path d="M1 5H15V15H1Z" fill="#fff"/><path d="M5.500 5V3C5.500 1 10.500 1 10.500 3V5" fill="none" stroke="#fff" stroke-width="1.400"/><path d="M4 7H7.500V9.500H4ZM8.500 7H12V9.500H8.500ZM4 10.500H7.500V13H4ZM8.500 10.500H12V13H8.500Z" fill="#111"/>'],
  ['OneDrive', '', '<path d="M2 12C-1 11 0 7.500 3 8C3 4 8 3 9.500 6C12 5 14 6.500 13.500 8.500C17 9 16.500 13 14 13H5Z" fill="#1246a5"/><path d="M6 13C4 12 5 9.500 7 10C8 7.500 11 8 11.500 10C15 9.500 15 13 13 13Z" fill="#1d5fc6" stroke="#000" stroke-width="0.500"/>'],
  ['Calendar', '', '<path d="M1.500 3.500H14.500V14.500H1.500ZM1.500 5.500H14.500M4.500 1V4M11.500 1V4" fill="none" stroke="#fff" stroke-width="1.400"/><path d="M4 8H12M4 10H12M4 12H10" stroke="#fff" stroke-dasharray="2 1"/>'],
  ['Fitbit', '', '<g fill="#eee"><circle cx="8" cy="3" r="1"/><circle cx="8" cy="5.500" r="1.100"/><circle cx="8" cy="8" r="1.300"/><circle cx="8" cy="10.500" r="1.100"/><circle cx="8" cy="13" r="1"/><circle cx="5.500" cy="6" r="1"/><circle cx="5.500" cy="8" r="1"/><circle cx="5.500" cy="10" r="1"/><circle cx="10.500" cy="5.500" r="1"/><circle cx="10.500" cy="8" r="1.200"/><circle cx="10.500" cy="10.500" r="1"/><circle cx="3.200" cy="8" r="0.800"/><circle cx="12.800" cy="8" r="1"/></g>'],
  ['Malwarebytes', '', '<path d="M1.500 14C-0.500 8 1 4 3.500 2L8 9L12.500 2C15 4 16.500 8 14.500 14H12C13 11 12.800 9 12 7L8.500 13H7.500L4 7C3.200 9 3 11 4 14Z" fill="#2a6cb8"/>'],
  ['Notes', '', '<path d="M1 2H15V4H1ZM2 4H14V15H2Z" fill="#f3f3ee"/><path d="M3 13L13 4" stroke="#c01f2e" stroke-width="2"/><path d="M3 15H14" stroke="#999"/>'],
  ['Webcam', 'open', '<circle cx="8" cy="6" r="5.500" fill="#8d99a8"/><circle cx="8" cy="6" r="3.600" fill="#23364f"/><circle cx="8" cy="6" r="1.500" fill="#6fa4de"/><path d="M6 11H10L11 15H5Z" fill="#b5906a"/>'],
  ['Camtasia', 'open', '<path d="M0 0H16V16H0Z" fill="#7fb24a"/><path d="M0 0H16L0 12Z" fill="#97c562"/><path d="M11.500 3.500H6.500Q5 3.500 5 5V11Q5 12.500 6.500 12.500H11.500" fill="none" stroke="#fff" stroke-width="2.200"/>'],
  ['Chrome', 'open current', '<circle cx="8" cy="8" r="7.500" fill="#f6c92c"/><path d="M8 8L1.500 4.200A7.500 7.500 0 0 1 14.800 5H8Z" fill="#dd4437"/><path d="M8 8L5.500 9.500L1.500 4.200A7.500 7.500 0 0 0 7.500 15.500L11 9.500Z" fill="#27a055"/><circle cx="8" cy="8" r="3.500" fill="#fff"/><circle cx="8" cy="8" r="2.700" fill="#4587ee"/>'],
  ['Camtasia Recorder', 'open', '<path d="M0 0H16V16H0Z" fill="#fff"/><path d="M11 4H6.500Q5 4 5 5.500V10.500Q5 12 6.500 12H11" fill="none" stroke="#3c4c2c" stroke-width="2"/><path d="M5 8V11" stroke="#6fa83c" stroke-width="2"/>'],
];

define('task-bar', `
  <style>
    :host { display: flex; flex: none; height: 27px; background: #000; color: #ddd; font: 10px/12px "Open Sans", sans-serif; }
    button.start { width: 32px; padding: 0; border: 0; background: none; line-height: 0; }
    label { display: flex; align-items: center; gap: 4px; width: 225px; padding: 0 6px 0 6px; margin-right: 3px; background: #303030; box-sizing: border-box; }
    input { flex: 1; min-width: 0; padding: 0; border: 0; background: none; font: inherit; }
    input::placeholder { color: #9c9c9c; opacity: 1; }
    .tray { display: flex; align-items: center; gap: 5px; margin-left: auto; padding-right: 16px; }
    time { width: 40px; margin-right: 6px; text-align: center; font: 8px/12px "Liberation Sans", sans-serif; color: #eee; white-space: nowrap; }
  </style>
  <button class="start" aria-label="Start"><svg width="12" height="12" fill="#fff"><path d="M0 2L5.200 1.200V5.700H0ZM5.800 1.100L12 0V5.700H5.800ZM0 6.300H5.200V10.800L0 10ZM5.800 6.300H12V12L5.800 11Z"/></svg></button>
  <label>
    <svg width="14" height="14"><circle cx="7" cy="7" r="5.800" fill="none" stroke="#fff" stroke-width="1.800"/></svg>
    <input type="text" aria-label="Search" placeholder="Ask me anything">
    <svg width="8" height="13" fill="none" stroke="#aaa"><rect x="2.500" y="0.500" width="3" height="7" rx="1.500"/><path d="M0.500 6V8Q0.500 9.500 4 9.500Q7.500 9.500 7.500 8V6M4 9.500V12"/></svg>
  </label>
  ${apps.map(([name, state, art]) => `<task-button ${state}><svg width="16" height="16" viewBox="0 0 16 16" role="img" aria-label="${name}">${art}</svg></task-button>`).join('')}
  <div class="tray">
    <svg width="9" height="6"><path d="M0.500 5L4.500 1L8.500 5" fill="none" stroke="#eee"/></svg>
    <svg width="13" height="11" fill="none" stroke="#eee"><path d="M0.500 3.500H2.500L5.500 1V10L2.500 7.500H0.500ZM7.500 3.500Q9 5.500 7.500 7.500M9 2Q11.500 5.500 9 9M10.500 1Q14 5.500 10.500 10"/></svg>
    <time datetime="2016-11-24T16:57">16:57<br>24/11/2016</time>
    <svg width="12" height="12" fill="none" stroke="#eee"><path d="M0.500 0.500H11.500V9.500H8.500L6 11.500V9.500H0.500Z"/></svg>
  </div>
`);
</script>
</body>
</html>
